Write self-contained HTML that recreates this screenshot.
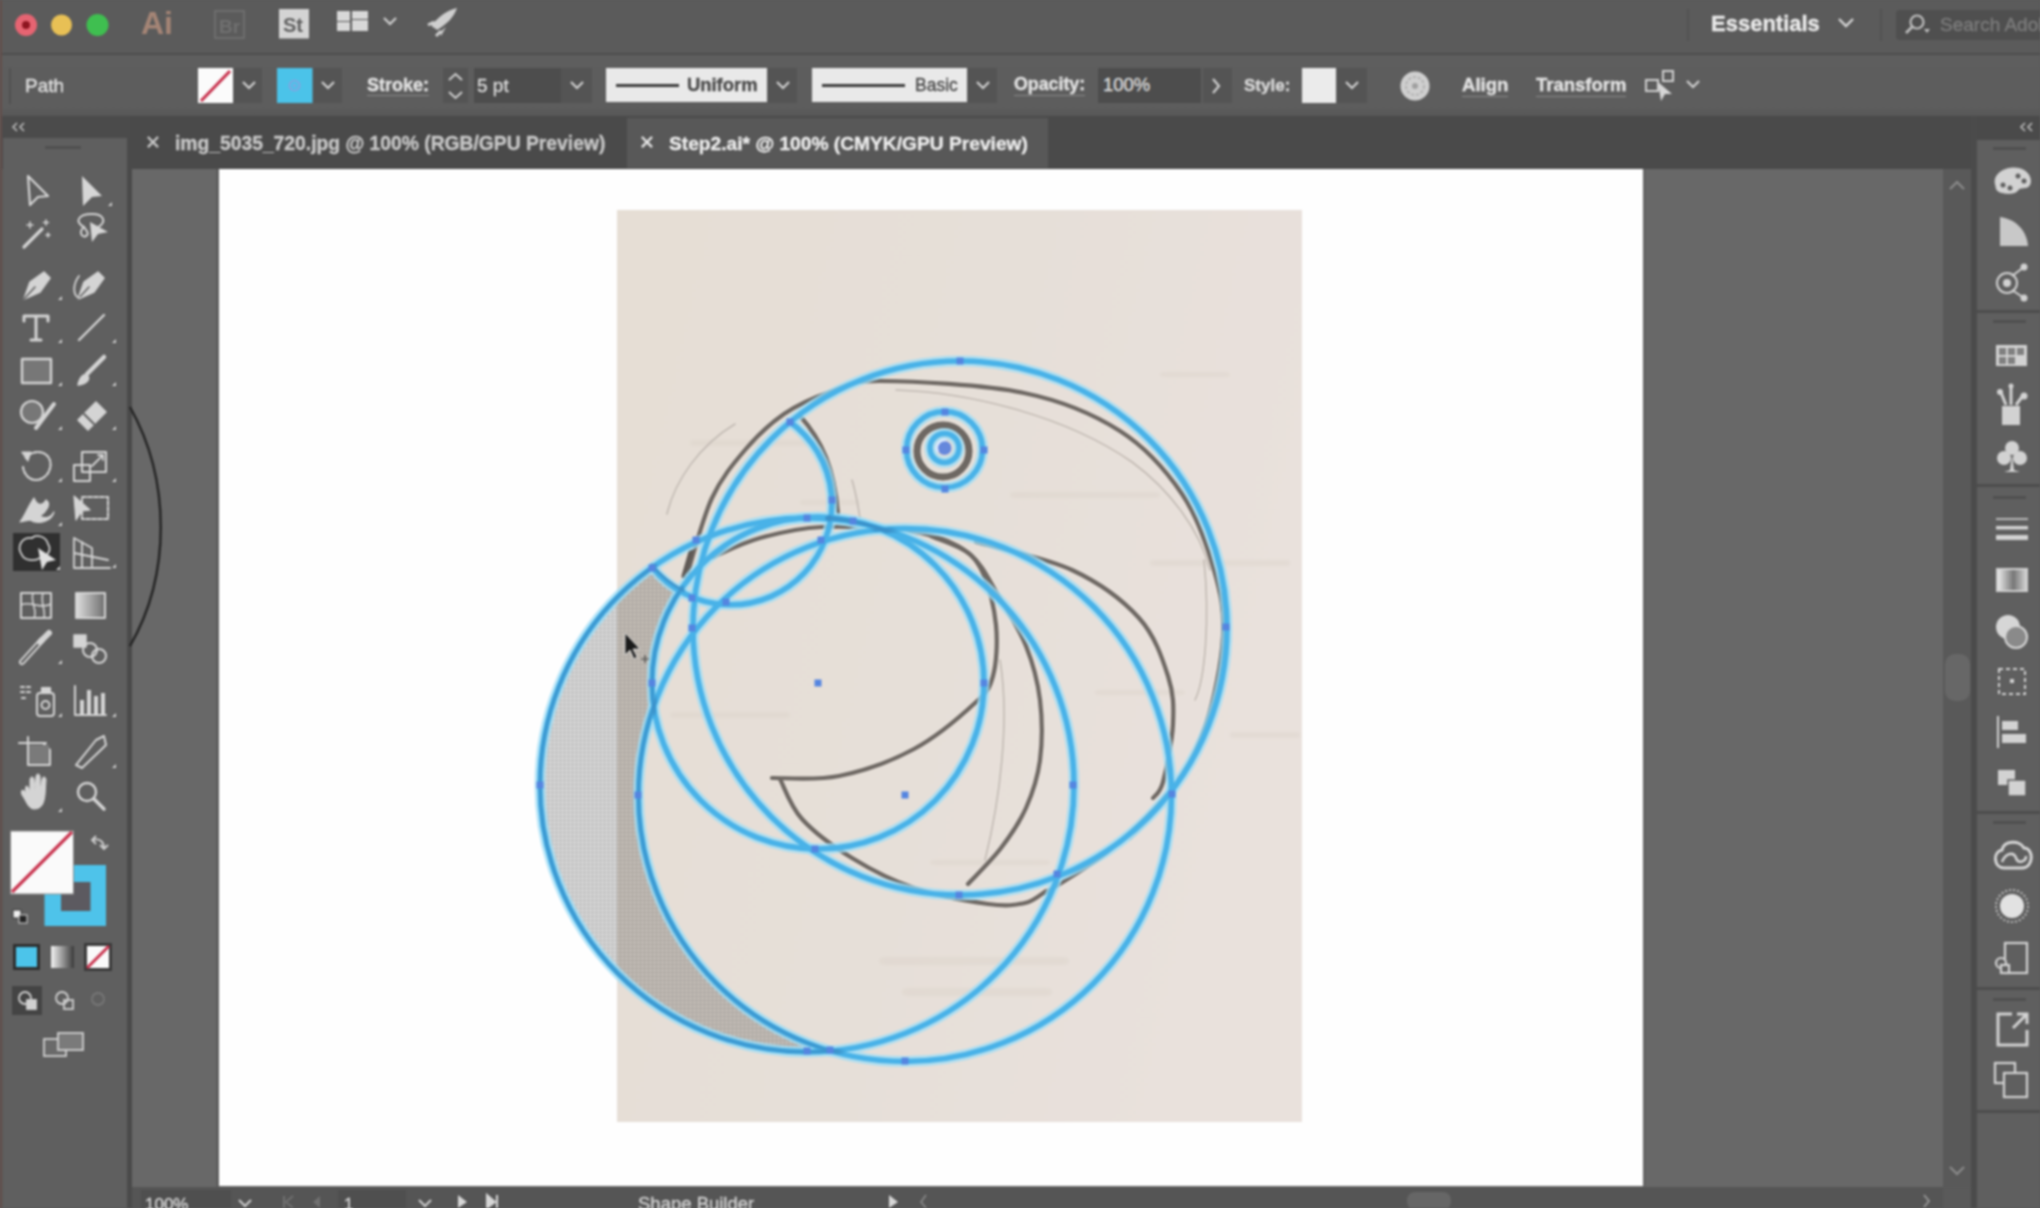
<!DOCTYPE html>
<html><head><meta charset="utf-8">
<style>
*{margin:0;padding:0;box-sizing:border-box}
html,body{width:2040px;height:1208px;overflow:hidden;background:#5a5a5a;font-family:"Liberation Sans",sans-serif}
#wrap{position:absolute;left:0;top:0;width:2040px;height:1208px;filter:blur(0.9px)}
.t{-webkit-text-stroke:0.35px currentColor}
.a{position:absolute}
#title{left:0;top:0;width:2040px;height:55px;background:#5b5b5b;border-bottom:2px solid #4d4d4d}
#ctrl{left:0;top:55px;width:2040px;height:61px;background:linear-gradient(#5e5e5e 0,#5d5d5d 85%,#575757 100%)}
#tabs{left:0;top:116px;width:2040px;height:53px;background:#4a4a4a}
#canvas{left:132px;top:169px;width:1811px;height:1018px;background:#686868}
#artboard{left:219px;top:169px;width:1424px;height:1017px;background:#fefefe}
#vscroll{left:1943px;top:169px;width:28px;height:1018px;background:#595959}
#status{left:132px;top:1187px;width:1811px;height:21px;background:#555555}
#lpanel{left:3px;top:138px;width:124px;height:1070px;background:#5f5f5f}
#lsep{left:127px;top:116px;width:5px;height:1092px;background:#4a4a4a}
#rdock{left:1977px;top:140px;width:63px;height:1068px;background:#5f5f5f}
#rsep{left:1971px;top:116px;width:6px;height:1092px;background:#4b4b4b}
.t{position:absolute;white-space:nowrap;line-height:1;color:#e4e4e4}
.b{font-weight:bold}
.u{border-bottom:1px solid #8a8a8a}
.dd{position:absolute;top:68px;height:35px;background:#545454}
.inp{position:absolute;top:68px;height:35px;background:#4d4d4d}
</style></head><body><div id="wrap">
<div id="title" class="a"></div>
<div id="ctrl" class="a"></div>
<div id="tabs" class="a"></div>
<div id="lsep" class="a"></div>
<div id="lpanel" class="a"></div>
<div id="canvas" class="a"></div>
<div id="artboard" class="a"></div>
<div class="a" style="left:216px;top:169px;width:3px;height:1018px;background:#5e5e5e"></div>
<div class="a" style="left:1643px;top:169px;width:3px;height:1018px;background:#636363"></div>
<div id="vscroll" class="a"></div>
<div id="rsep" class="a"></div>
<div id="rdock" class="a"></div>
<div id="status" class="a"></div>

<!-- ===== TITLE BAR ===== -->
<svg class="a" style="left:0;top:0" width="480" height="55">
  <circle cx="26" cy="25" r="11" fill="#e66472"/>
  <circle cx="26" cy="25" r="4" fill="#8e1520"/>
  <circle cx="61.5" cy="25" r="10.5" fill="#e8c055"/>
  <circle cx="97.5" cy="25" r="11" fill="#3fbf50"/>
  <text x="141" y="34" font-family="Liberation Sans" font-weight="bold" font-size="32" fill="#a58576">Ai</text>
  <rect x="215" y="11" width="29" height="27" fill="none" stroke="#6e6e6e" stroke-width="2"/>
  <text x="219" y="33" font-family="Liberation Sans" font-weight="bold" font-size="19" fill="#707070">Br</text>
  <rect x="279" y="9" width="30" height="29.5" fill="#d4d4d4"/>
  <text x="283" y="32" font-family="Liberation Sans" font-weight="bold" font-size="20" fill="#606060">St</text>
  <rect x="337" y="11" width="13" height="10" fill="#d8d8d8"/>
  <rect x="337" y="22" width="13" height="9" fill="#d8d8d8"/>
  <rect x="352" y="11" width="16" height="8" fill="#d8d8d8"/>
  <rect x="352" y="20" width="16" height="11" fill="#d8d8d8"/>
  <path d="M384 18 L390 24 L396 18" fill="none" stroke="#d0d0d0" stroke-width="2.2"/>
  <path d="M457 8 C448 10 438 16 432 26 L437 30 C447 24 454 17 457 8 Z" fill="#cfcfcf"/>
  <path d="M430 24 L437 20 L434 28 Z M440 32 L446 27 L441 36 Z" fill="#cfcfcf"/>
  <path d="M428 25 l6 -3 M436 36 l5 -5" stroke="#cfcfcf" stroke-width="3"/>
</svg>
<div class="a" style="left:1687px;top:9px;width:2px;height:32px;background:#525252"></div>
<div class="t b" style="left:1711px;top:13px;font-size:22px;color:#ececec">Essentials</div>
<svg class="a" style="left:1836px;top:16px" width="20" height="14"><path d="M3 3 L10 10 L17 3" fill="none" stroke="#d6d6d6" stroke-width="2.4"/></svg>
<div class="a" style="left:1880px;top:9px;width:2px;height:32px;background:#525252"></div>
<div class="a" style="left:1896px;top:10px;width:144px;height:30px;background:#4f4f4f;border-radius:4px 0 0 4px"></div>
<svg class="a" style="left:1900px;top:12px" width="34" height="26"><circle cx="17" cy="10" r="6.5" fill="none" stroke="#bfbfbf" stroke-width="2.2"/><path d="M12.5 14.5 L6 21" stroke="#bfbfbf" stroke-width="2.6"/><path d="M24 17 l6 0 l-3 4z" fill="#bfbfbf"/></svg>
<div class="t" style="left:1940px;top:15px;font-size:19px;color:#7c7c7c">Search Adob</div>

<!-- ===== CONTROL BAR ===== -->
<div class="a" style="left:9px;top:68px;width:2px;height:36px;background:#505050"></div>
<div class="t" style="left:25px;top:76px;font-size:19px;color:#e0e0e0">Path</div>
<svg class="a" style="left:198px;top:68px" width="36" height="36"><rect width="35" height="35" fill="#fbfbfb"/><path d="M3 33 L32 3" stroke="#c8324e" stroke-width="3.2"/></svg>
<div class="dd" style="left:234px;width:28px"></div>
<svg class="a" style="left:240px;top:80px" width="18" height="12"><path d="M3 2 L9 8 L15 2" fill="none" stroke="#d0d0d0" stroke-width="2.2"/></svg>
<svg class="a" style="left:277px;top:68px" width="36" height="36"><rect width="35.5" height="35" fill="#4bc3e9"/><circle cx="17.5" cy="17.5" r="5" fill="none" stroke="#8d9fe0" stroke-width="1.6"/><circle cx="17.5" cy="17.5" r="1.5" fill="#8d9fe0"/></svg>
<div class="dd" style="left:313px;width:29px"></div>
<svg class="a" style="left:319px;top:80px" width="18" height="12"><path d="M3 2 L9 8 L15 2" fill="none" stroke="#d0d0d0" stroke-width="2.2"/></svg>
<div class="t b u" style="left:367px;top:76px;font-size:18px;padding-bottom:1px">Stroke:</div>
<div class="dd" style="left:443px;width:25px"></div>
<svg class="a" style="left:443px;top:68px" width="25" height="36"><path d="M6 12 L12.5 6 L19 12 M6 24 L12.5 30 L19 24" fill="none" stroke="#cfcfcf" stroke-width="2"/></svg>
<div class="inp" style="left:474px;width:87px"></div>
<div class="t" style="left:477px;top:76px;font-size:19px;color:#dcdcdc">5 pt</div>
<div class="dd" style="left:561px;width:31px"></div>
<svg class="a" style="left:568px;top:80px" width="18" height="12"><path d="M3 2 L9 8 L15 2" fill="none" stroke="#d0d0d0" stroke-width="2.2"/></svg>

<div class="a" style="left:606px;top:68px;width:161px;height:34px;background:#e9e9e9"></div>
<div class="a" style="left:616px;top:84px;width:63px;height:3px;background:#3c3c3c"></div>
<div class="t b" style="left:687px;top:76px;font-size:18.4px;color:#4a4a4a">Uniform</div>
<div class="dd" style="left:768px;width:29px"></div>
<svg class="a" style="left:774px;top:80px" width="18" height="12"><path d="M3 2 L9 8 L15 2" fill="none" stroke="#d0d0d0" stroke-width="2.2"/></svg>
<div class="a" style="left:812px;top:68px;width:155px;height:34px;background:#e9e9e9"></div>
<div class="a" style="left:822px;top:84px;width:83px;height:3px;background:#3c3c3c"></div>
<div class="t" style="left:915px;top:77px;font-size:17.5px;color:#4a4a4a">Basic</div>
<div class="dd" style="left:968px;width:29px"></div>
<svg class="a" style="left:974px;top:80px" width="18" height="12"><path d="M3 2 L9 8 L15 2" fill="none" stroke="#d0d0d0" stroke-width="2.2"/></svg>

<div class="t b u" style="left:1014px;top:76px;font-size:17.8px;padding-bottom:1px">Opacity:</div>
<div class="inp" style="left:1098px;width:103px"></div>
<div class="t" style="left:1103px;top:76px;font-size:18.5px;color:#dcdcdc">100%</div>
<div class="dd" style="left:1203px;width:29px"></div>
<svg class="a" style="left:1209px;top:76px" width="14" height="20"><path d="M4 3 L10 10 L4 17" fill="none" stroke="#d0d0d0" stroke-width="2.2"/></svg>
<div class="t b" style="left:1244px;top:77px;font-size:17px;color:#dadada">Style:</div>
<div class="a" style="left:1302px;top:68px;width:34px;height:35px;background:#ebebeb"></div>
<div class="dd" style="left:1337px;width:30px"></div>
<svg class="a" style="left:1343px;top:80px" width="18" height="12"><path d="M3 2 L9 8 L15 2" fill="none" stroke="#d0d0d0" stroke-width="2.2"/></svg>
<svg class="a" style="left:1398px;top:69px" width="34" height="34"><circle cx="17" cy="17" r="14.5" fill="#cfcfcf"/><circle cx="17" cy="17" r="9" fill="none" stroke="#a8a8a8" stroke-width="1.5" stroke-dasharray="3 2"/><circle cx="17" cy="17" r="3" fill="#a0a0a0"/></svg>
<div class="t b u" style="left:1462px;top:76px;font-size:18.6px;padding-bottom:1px">Align</div>
<div class="t b u" style="left:1536px;top:76px;font-size:18.5px;padding-bottom:1px">Transform</div>
<svg class="a" style="left:1644px;top:68px" width="34" height="36"><rect x="2" y="12" width="12" height="11" fill="none" stroke="#cfcfcf" stroke-width="2"/><rect x="19" y="3" width="10" height="10" fill="none" stroke="#cfcfcf" stroke-width="2"/><path d="M14 14 L28 26 L21 26 L17 33 Z" fill="#d6d6d6"/></svg>
<svg class="a" style="left:1684px;top:79px" width="18" height="12"><path d="M3 2 L9 8 L15 2" fill="none" stroke="#d0d0d0" stroke-width="2.2"/></svg>

<!-- ===== TABS ===== -->
<div class="a" style="left:0;top:116px;width:130px;height:22px;background:#4b4b4b"></div>
<svg class="a" style="left:8px;top:120px" width="20" height="14"><path d="M9 3 L5 7 L9 11 M16 3 L12 7 L16 11" fill="none" stroke="#bdbdbd" stroke-width="1.6"/></svg>
<svg class="a" style="left:2016px;top:120px" width="20" height="14"><path d="M9 3 L5 7 L9 11 M16 3 L12 7 L16 11" fill="none" stroke="#bdbdbd" stroke-width="1.6"/></svg>
<div class="a" style="left:627px;top:118px;width:421px;height:50px;background:#585858"></div>
<div class="t" style="left:145px;top:133px;font-size:19px;color:#c9c9c9">&#x2715;</div>
<div class="t b" style="left:175px;top:134px;font-size:19.3px;color:#c8c8c8">img_5035_720.jpg @ 100% (RGB/GPU Preview)</div>
<div class="t" style="left:639px;top:133px;font-size:19px;color:#e8e8e8">&#x2715;</div>
<div class="t b" style="left:669px;top:134px;font-size:19.2px;color:#eeeeee">Step2.ai* @ 100% (CMYK/GPU Preview)</div>


<!-- ===== LEFT TOOLBAR ===== -->
<div class="a" style="left:0;top:0;width:2px;height:1208px;background:#644e4a"></div>
<div class="a" style="left:45px;top:146px;width:36px;height:3px;background:#505050"></div>
<svg class="a" style="left:0;top:160px" width="127" height="920" viewBox="0 160 127 920">
 <defs><linearGradient id="tg2" x1="0" x2="1"><stop offset="0" stop-color="#dedede"/><stop offset="1" stop-color="#6e6e6e"/></linearGradient></defs>
 <g fill="none" stroke="#d4d4d4" stroke-width="2.2" stroke-linejoin="round" stroke-linecap="round">
  <!-- selection -->
  <path d="M28 176 L48 196 L38 197 L30 205 Z"/>
  <!-- magic wand -->
  <path d="M24 247 L42 229" stroke-width="3.2"/>
  <path d="M30 222 l0 6 M27 225 l6 0 M46 220 l0 5 M43.5 222.5 l5 0 M48 233 l0 4 M46 235 l4 0" stroke-width="1.6"/>
  <!-- lasso -->
  <path d="M84 227 C74 222 78 214 92 214 C104 214 107 222 98 227 M84 227 C78 232 82 238 86 236 C90 234 86 230 84 227" stroke-width="2"/>
  <!-- pen -->
  <path d="M24 299 L30 282 L44 272 L50 278 L40 292 Z" fill="#d4d4d4" stroke-width="1.5"/>
  <path d="M24 299 L35 287" stroke="#5f5f5f" stroke-width="1.6"/>
  <!-- curvature pen -->
  <path d="M78 299 L84 282 L98 272 L104 278 L94 292 Z" fill="#d4d4d4" stroke-width="1.5"/>
  <path d="M78 299 L89 287" stroke="#5f5f5f" stroke-width="1.6"/>
  <path d="M79 276 C73 284 72 296 80 298" stroke-width="1.8"/>
  <!-- T -->
  <path d="M24 316 L48 316 M24 316 L24 321 M48 316 L48 321 M36 316 L36 340 M31 340 L41 340" stroke-width="3"/>
  <!-- line -->
  <path d="M79 340 L104 315" stroke-width="2.4"/>
  <!-- rectangle -->
  <rect x="22" y="359" width="29" height="24" fill="#777777" stroke-width="2.4"/>
  <!-- paintbrush -->
  <path d="M78 385 C80 376 84 373 88 376 C90 380 86 384 78 385 Z" fill="#d4d4d4" stroke-width="1.5"/>
  <path d="M87 374 L104 357" stroke-width="4.5"/>
  <!-- shaper -->
  <circle cx="32" cy="412" r="11" fill="#777777" stroke-width="2.2"/>
  <path d="M36 428 L54 404" stroke-width="4"/>
  <!-- eraser -->
  <path d="M78 420 L96 402 L106 412 L88 430 Z" fill="#d4d4d4" stroke-width="1.5"/>
  <path d="M84 414 L94 424" stroke="#5f5f5f" stroke-width="2"/>
  <!-- rotate -->
  <path d="M26 458 C32 450 44 450 49 458 C54 468 46 480 36 480 C28 480 23 472 23 466" stroke-width="2.2" stroke-dasharray="3 1.6"/>
  <path d="M22 452 L31 452 L28 461 Z" fill="#d4d4d4" stroke-width="1"/>
  <!-- scale -->
  <rect x="74" y="465" width="16" height="16" stroke-width="2"/>
  <rect x="82" y="452" width="24" height="20" stroke-width="2"/>
  <path d="M92 466 L103 455 M98 455 l5 0 l0 5" stroke-width="1.8"/>
  <!-- width/warp -->
  <path d="M20 522 C26 514 28 506 34 498 C38 508 44 504 46 500 C52 504 46 512 40 516 C46 520 52 516 54 512 C52 520 40 526 30 520 Z" fill="#d4d4d4" stroke-width="1.2"/>
  <!-- free transform -->
  <rect x="82" y="497" width="26" height="22" stroke-width="2" stroke-dasharray="4 2"/>
  <path d="M74 496 L90 510 L82 511 L76 520 Z" fill="#d4d4d4" stroke-width="1.2"/>
  <!-- perspective -->
  <path d="M74 538 L74 568 L110 568 M74 538 L92 548 L92 566 M74 553 L108 560 M82 542 L82 568" stroke-width="1.8"/>
  <!-- mesh -->
  <rect x="21" y="593" width="30" height="25" stroke-width="2"/>
  <path d="M21 605 C30 600 40 610 51 604 M33 593 C30 603 38 610 34 618 M43 593 C40 603 46 610 44 618" stroke-width="1.6"/>
  <!-- gradient tool -->
  <rect x="76" y="593" width="29" height="25" fill="url(#tg2)" stroke-width="2"/>
  <!-- eyedropper -->
  <path d="M22 662 L42 640" stroke-width="6"/>
  <path d="M22 662 L42 640" stroke="#5f5f5f" stroke-width="2.4"/>
  <path d="M40 642 L49 633" stroke-width="6"/>
  <!-- blend -->
  <rect x="74" y="635" width="12" height="12" fill="#d4d4d4" stroke-width="1.5"/>
  <circle cx="90" cy="650" r="7" stroke-width="2"/>
  <circle cx="99" cy="656" r="7" stroke-width="2"/>
  <!-- symbol sprayer -->
  <path d="M21 687 l3 0 M27 687 l3 0 M21 692 l3 0 M27 692 l3 0 M22 698 l3 0" stroke-width="2.2"/>
  <rect x="37" y="693" width="17" height="23" rx="3" stroke-width="2"/>
  <circle cx="45.5" cy="705" r="4" stroke-width="2"/>
  <path d="M42 688 l8 0 l0 5 l-8 0z" fill="#d4d4d4"/>
  <!-- column graph -->
  <path d="M75 686 L75 715 L106 715" stroke-width="2"/>
  <rect x="80" y="700" width="4" height="15" fill="#d4d4d4" stroke="none"/>
  <rect x="87" y="690" width="4" height="25" fill="#d4d4d4" stroke="none"/>
  <rect x="94" y="696" width="4" height="19" fill="#d4d4d4" stroke="none"/>
  <rect x="101" y="693" width="4" height="22" fill="#d4d4d4" stroke="none"/>
  <!-- artboard -->
  <path d="M19 743 L46 743 M28 737 L28 765 L50 765 L50 750 L43 743" stroke-width="2"/>
  <rect x="29" y="745" width="20" height="19" fill="#7a7a7a" stroke="none"/>
  <!-- knife/pencil -->
  <path d="M76 765 L96 740 L104 736 L106 745 L82 768 Z" stroke-width="2"/>
  <!-- hand -->
  <path d="M26 793 C24 784 28 784 30 792 L30 780 C30 776 34 776 34 780 L35 790 L36 777 C36 773 40 773 40 777 L40 790 L42 780 C42 776 46 776 46 780 L45 795 C44 803 42 809 34 809 C28 809 26 800 22 795 C20 790 23 788 26 793 Z" fill="#d4d4d4" stroke-width="1"/>
  <!-- zoom -->
  <circle cx="87" cy="792" r="9" stroke-width="2.4"/>
  <path d="M94 799 L104 809" stroke-width="3.5"/>
 </g>
 <g fill="#cfcfcf">
  <path d="M108 206 l4 -4 l0 4z M58 300 l4 -4 l0 4z M58 343 l4 -4 l0 4z M112 343 l4 -4 l0 4z M58 386 l4 -4 l0 4z M112 386 l4 -4 l0 4z M58 430 l4 -4 l0 4z M112 430 l4 -4 l0 4z M58 482 l4 -4 l0 4z M112 482 l4 -4 l0 4z M58 526 l4 -4 l0 4z M112 568 l4 -4 l0 4z M58 664 l4 -4 l0 4z M58 717 l4 -4 l0 4z M112 717 l4 -4 l0 4z M112 768 l4 -4 l0 4z M58 812 l4 -4 l0 4z"/>
 </g>
 <!-- direct selection filled -->
 <path d="M82 176 L102 196 L92 197 L83 206 Z" fill="#d6d6d6"/>
 <!-- lasso arrow -->
 <path d="M90 222 L108 232 L98 234 L92 242 Z" fill="#d6d6d6"/>
 <!-- shape builder selected -->
 <rect x="13" y="533" width="47" height="38" fill="#303030"/>
 <path d="M22 555 C16 546 22 537 32 538 C36 534 46 536 48 544 C52 550 48 556 40 558 C34 562 24 560 22 555 Z" fill="none" stroke="#cfcfcf" stroke-width="1.8"/>
 <path d="M38 548 L56 560 L47 562 L42 570 Z" fill="#e0e0e0"/>
 <path d="M56 570 l4 -4 l0 4z" fill="#cfcfcf"/>
 <!-- fill/stroke -->
 <rect x="44.5" y="865" width="61.5" height="61" fill="#4ec3ea"/>
 <rect x="61" y="882" width="29.5" height="29" fill="#5c5a60"/>
 <rect x="10.5" y="831" width="63" height="63" fill="#fafafa" stroke="#8a8a8a" stroke-width="1"/>
 <path d="M12 892 L72 832" stroke="#c9344f" stroke-width="3.2"/>
 <path d="M93 840 C100 838 104 842 104 848 M100 845 l4 4 l4 -4 M96 836 l-4 4 l4 4" fill="none" stroke="#cfcfcf" stroke-width="1.8"/>
 <rect x="13" y="910" width="8" height="8" fill="#f0f0f0" stroke="#333" stroke-width="1"/>
 <rect x="19" y="915" width="8" height="8" fill="#222" stroke="#ddd" stroke-width="1"/>
 <!-- modes -->
 <rect x="13" y="944" width="27" height="26" fill="#2e2e2e"/>
 <rect x="16" y="947" width="21" height="20" fill="#4cc4ea"/>
 <defs><linearGradient id="tg" x1="0" x2="1"><stop offset="0" stop-color="#f4f4f4"/><stop offset="1" stop-color="#3a3a3a"/></linearGradient></defs>
 <rect x="51" y="946" width="23" height="22" fill="url(#tg)"/>
 <rect x="84" y="943" width="28" height="28" fill="#3a3a3a"/>
 <rect x="87" y="946" width="22" height="22" fill="#fafafa"/>
 <path d="M87 968 L109 946" stroke="#c9344f" stroke-width="3"/>
 <rect x="12" y="986" width="30" height="29" fill="#444444"/>
 <g fill="none" stroke="#d0d0d0" stroke-width="1.8">
  <circle cx="25" cy="998" r="6"/><rect x="27" y="1000" width="9" height="9" fill="#d0d0d0"/>
  <circle cx="62" cy="998" r="6"/><rect x="64" y="1000" width="9" height="9"/>
  <circle cx="98" cy="999" r="6" stroke="#777"/>
  <rect x="44" y="1039" width="22" height="17" stroke="#d0d0d0" fill="#6a6a6a"/>
  <rect x="58" y="1033" width="25" height="17" stroke="#d0d0d0" fill="#7a7a7a"/>
 </g>
</svg>


<!-- ===== RIGHT DOCK ===== -->
<svg class="a" style="left:1940px;top:140px" width="100" height="1068" viewBox="1940 140 100 1068">
 <!-- scrollbar arrows & thumb -->
 <path d="M1950 189 L1957 182 L1964 189" fill="none" stroke="#8c8c8c" stroke-width="2"/>
 <path d="M1950 1167 L1957 1174 L1964 1167" fill="none" stroke="#8c8c8c" stroke-width="2"/>
 <rect x="1945" y="654" width="25" height="47" rx="10" fill="#676767"/>
 <!-- dividers -->
 <rect x="1977" y="310" width="63" height="3" fill="#4d4d4d"/>
 <rect x="1977" y="484" width="63" height="3" fill="#4d4d4d"/>
 <rect x="1977" y="811" width="63" height="3" fill="#4d4d4d"/>
 <rect x="1977" y="987" width="63" height="3" fill="#4d4d4d"/>
 <rect x="1977" y="1110" width="63" height="3" fill="#4d4d4d"/>
 <g fill="#505050">
  <rect x="1993" y="147" width="33" height="3"/>
  <rect x="1993" y="320" width="33" height="3"/>
  <rect x="1993" y="496" width="33" height="3"/>
  <rect x="1993" y="821" width="33" height="3"/>
  <rect x="1993" y="998" width="33" height="3"/>
 </g>
 <g fill="#d2d2d2" stroke="#d2d2d2">
  <!-- palette -->
  <path d="M1996 186 C1992 176 2002 168 2014 168 C2026 168 2032 176 2030 184 C2028 190 2020 186 2018 190 C2016 194 2006 194 2000 192 C1997 191 1996 189 1996 186 Z" stroke-width="1"/>
  <g fill="#5f5f5f" stroke="none"><circle cx="2003" cy="185" r="2.5"/><circle cx="2010" cy="188" r="2.5"/><circle cx="2018" cy="176" r="2.5"/><circle cx="2024" cy="181" r="2.5"/></g>
  <!-- gradient quarter -->
  <path d="M2000 217 C2016 219 2027 231 2028 246 L2000 246 Z" stroke="none" fill="#c8c8c8"/>
  <!-- appearance -->
  <circle cx="2007" cy="283" r="10" fill="none" stroke-width="2"/>
  <circle cx="2007" cy="283" r="4" stroke="none"/>
  <path d="M2012 276 L2024 267 M2012 290 L2024 298" stroke-width="2"/>
  <circle cx="2024" cy="267" r="3.5" stroke="none"/><circle cx="2024" cy="298" r="3.5" stroke="none"/>
  <!-- swatches -->
  <rect x="1996" y="345" width="31" height="21" stroke="none"/>
  <g fill="#808080" stroke="none"><rect x="1999" y="348" width="7" height="7"/><rect x="2008" y="348" width="7" height="7"/><rect x="2017" y="348" width="7" height="7"/><rect x="1999" y="357" width="7" height="7"/><rect x="2008" y="357" width="7" height="7"/></g>
  <!-- brushes -->
  <rect x="2002" y="406" width="18" height="19" stroke="none"/>
  <path d="M2006 405 L2000 390 M2011 405 L2011 385 M2016 405 L2024 394" stroke-width="3"/>
  <circle cx="2000" cy="392" r="3" stroke="none"/><circle cx="2024" cy="396" r="3.5" stroke="none"/><circle cx="2011" cy="386" r="2.5" stroke="none"/>
  <!-- club -->
  <circle cx="2012" cy="448" r="7" stroke="none"/><circle cx="2004" cy="458" r="7" stroke="none"/><circle cx="2020" cy="458" r="7" stroke="none"/>
  <path d="M2012 455 L2010 470 L2004 472 L2020 472 L2014 470 Z" stroke="none"/>
  <!-- stroke lines -->
  <rect x="1996" y="518" width="32" height="2" stroke="none" fill="#b8b8b8"/>
  <rect x="1996" y="526" width="32" height="3.5" stroke="none"/>
  <rect x="1996" y="535" width="32" height="5" stroke="none"/>
 </g>
 <defs><linearGradient id="rg" x1="0" x2="1"><stop offset="0" stop-color="#dedede"/><stop offset="1" stop-color="#6a6a6a"/></linearGradient>
 <linearGradient id="rg2" x1="0" x2="1"><stop offset="0" stop-color="#f0f0f0"/><stop offset="0.55" stop-color="#777"/><stop offset="1" stop-color="#d8d8d8"/></linearGradient></defs>
 <rect x="1997" y="569" width="30" height="22" fill="url(#rg2)" stroke="#cfcfcf" stroke-width="2"/>
 <circle cx="2008" cy="627" r="12" fill="#d6d6d6"/>
 <circle cx="2016" cy="637" r="11" fill="#8a8a8a" stroke="#d6d6d6" stroke-width="2"/>
 <g fill="none" stroke="#d2d2d2" stroke-width="2">
  <rect x="1999" y="669" width="26" height="25" stroke-dasharray="4 3"/>
  <rect x="2010" y="679" width="4" height="4" fill="#d2d2d2" stroke="none"/>
  <path d="M1998 716 L1998 748"/>
 </g>
 <g fill="#d2d2d2">
  <rect x="2002" y="721" width="16" height="9"/>
  <rect x="2002" y="734" width="24" height="9"/>
  <rect x="1998" y="770" width="17" height="15"/>
  <rect x="2008" y="780" width="18" height="16" stroke="#5f5f5f" stroke-width="1.5"/>
 </g>
 <!-- CC -->
 <g fill="none" stroke="#d6d6d6" stroke-width="3">
  <path d="M2004 868 C1994 868 1992 852 2002 850 C2004 840 2020 840 2024 848 C2034 848 2034 868 2022 868 Z"/>
  <path d="M2002 862 C2006 852 2014 852 2016 858 C2018 864 2026 862 2026 856" stroke-width="2.5"/>
 </g>
 <circle cx="2012" cy="906" r="12" fill="#e2e2e2"/>
 <circle cx="2012" cy="906" r="16" fill="none" stroke="#bdbdbd" stroke-width="2" stroke-dasharray="2 2"/>
 <g fill="none" stroke="#d2d2d2" stroke-width="2.2">
  <rect x="2005" y="943" width="22" height="30"/>
  <circle cx="2001" cy="963" r="5" fill="#5f5f5f"/>
  <rect x="2001" y="965" width="8" height="8" fill="#5f5f5f"/>
  <path d="M1998 1021 L1998 1045 L2027 1045 L2027 1030 M2012 1014 L1998 1014 L1998 1021 M2017 1014 L2027 1014 L2027 1024 M2013 1028 L2026 1015" stroke-width="3"/>
  <rect x="1995" y="1063" width="20" height="20"/>
  <rect x="2004" y="1073" width="23" height="24" fill="#5f5f5f"/>
 </g>
</svg>


<!-- ===== STATUS BAR ===== -->
<div class="a" style="left:141px;top:1190px;width:90px;height:18px;background:#4f4f4f"></div>
<div class="t" style="left:145px;top:1196px;font-size:17px;color:#d8d8d8">100%</div>
<div class="a" style="left:338px;top:1190px;width:68px;height:18px;background:#4f4f4f"></div>
<div class="t" style="left:344px;top:1196px;font-size:17px;color:#d8d8d8">1</div>
<div class="t" style="left:638px;top:1195px;font-size:18.5px;color:#d0d0d0">Shape Builder</div>
<svg class="a" style="left:132px;top:1187px" width="1840" height="21" viewBox="132 1187 1840 21">
 <path d="M239 1200 L245 1206 L251 1200" fill="none" stroke="#cfcfcf" stroke-width="2"/>
 <path d="M419 1200 L425 1206 L431 1200" fill="none" stroke="#cfcfcf" stroke-width="2"/>
 <path d="M284 1196 L284 1208 M293 1196 L286 1202 L293 1208" fill="none" stroke="#707070" stroke-width="2"/>
 <path d="M320 1196 L313 1202 L320 1208" fill="#707070"/>
 <path d="M458 1195 L467 1202 L458 1208 Z" fill="#d6d6d6"/>
 <path d="M487 1195 L495 1202 L487 1208 Z M497 1195 L497 1208" fill="#d6d6d6" stroke="#d6d6d6" stroke-width="2"/>
 <path d="M889 1195 L898 1202 L889 1208 Z" fill="#d6d6d6"/>
 <path d="M926 1195 L921 1202 L926 1208" fill="none" stroke="#8a8a8a" stroke-width="1.6"/>
 <rect x="1407" y="1192" width="44" height="18" rx="8" fill="#666666"/>
 <path d="M1924 1195 L1929 1201 L1924 1207" fill="none" stroke="#9a9a9a" stroke-width="1.8"/>
</svg>

<!-- ===== ARTWORK ===== -->
<svg class="a" style="left:0;top:0" width="2040" height="1208" viewBox="0 0 2040 1208">
  <defs>
    <pattern id="hatch" width="4" height="4" patternUnits="userSpaceOnUse">
      <rect width="4" height="4" fill="#000" fill-opacity="0.15"/>
      <rect width="4" height="1" fill="#000" fill-opacity="0.12"/>
      <rect width="1" height="3" y="1" fill="#000" fill-opacity="0.12"/>
    </pattern>
    <mask id="crescent">
      <circle cx="807" cy="785" r="267" fill="#fff"/>
      <circle cx="905" cy="795" r="266.5" fill="#000"/>
      <circle cx="818" cy="683" r="166" fill="#000"/>
      <circle cx="730" cy="501" r="101" fill="#000"/>
    </mask>
    <mask id="crescentStroke">
      <circle cx="807" cy="785" r="271" fill="#fff"/>
      <circle cx="905" cy="795" r="262.5" fill="#000"/>
      <circle cx="818" cy="683" r="162" fill="#000"/>
      <circle cx="730" cy="501" r="97" fill="#000"/>
    </mask>
    <linearGradient id="photo" x1="0" y1="0" x2="1" y2="0.3">
      <stop offset="0" stop-color="#e6ded5"/>
      <stop offset="0.5" stop-color="#e6dfd8"/>
      <stop offset="1" stop-color="#e9e1dc"/>
    </linearGradient>
    <filter id="soft" x="-5%" y="-5%" width="110%" height="110%"><feGaussianBlur stdDeviation="0.9"/></filter>
    <filter id="soft2" x="-5%" y="-5%" width="110%" height="110%"><feGaussianBlur stdDeviation="0.6"/></filter>
  </defs>
  <rect x="617" y="210" width="685" height="912" fill="url(#photo)"/>
  <!-- faint paper marks -->
  <g fill="#d9d0c6" opacity="0.35" filter="url(#soft)">
    <rect x="690" y="440" width="130" height="6" rx="3"/>
    <rect x="1010" y="492" width="150" height="6" rx="3"/>
    <rect x="1150" y="560" width="140" height="6" rx="3"/>
    <rect x="670" y="712" width="120" height="6" rx="3"/>
    <rect x="1230" y="732" width="70" height="6" rx="3"/>
    <rect x="1095" y="690" width="90" height="5" rx="3"/>
    <rect x="879" y="957" width="190" height="8" rx="4"/>
    <rect x="902" y="988" width="150" height="8" rx="4"/>
    <rect x="1160" y="372" width="70" height="5" rx="3"/>
    <rect x="800" y="500" width="60" height="5" rx="3"/>
    <rect x="930" y="860" width="120" height="5" rx="3"/>
  </g>
  <!-- pencil sketch -->
  <g fill="none" stroke-linecap="round" filter="url(#soft2)">
    <g stroke="#c2bab3" stroke-width="1.6">
      <path d="M667 514 C675 480 700 445 735 424"/>
      <path d="M896 390 C960 392 1060 412 1132 462 C1170 490 1200 530 1210 570"/>
      <path d="M1204 560 C1210 620 1205 680 1195 700"/>
      <path d="M1000 660 C1010 720 1000 800 985 860"/>
      <path d="M852 480 C858 500 860 520 862 530"/>
      <path d="M1130 840 C1150 820 1180 790 1190 760"/>
    </g>
    <g stroke="#6e6864" stroke-width="4.2">
      <path d="M688.0 572.0 C692.0 559.7 702.5 518.3 712.0 498.0 C721.5 477.7 733.0 464.0 745.0 450.0 C757.0 436.0 769.8 423.7 784.0 414.0 C798.2 404.3 814.0 397.5 830.0 392.0 C846.0 386.5 847.7 380.8 880.0 381.0 C912.3 381.2 984.0 384.7 1024.0 393.0 C1064.0 401.3 1093.7 414.2 1120.0 431.0 C1146.3 447.8 1166.3 470.8 1182.0 494.0 C1197.7 517.2 1207.2 546.3 1214.0 570.0 C1220.8 593.7 1224.3 610.3 1223.0 636.0 C1221.7 661.7 1214.3 698.8 1206.0 724.0 C1197.7 749.2 1189.0 766.0 1173.0 787.0 C1157.0 808.0 1131.3 832.3 1110.0 850.0 C1088.7 867.7 1055.8 885.8 1045.0 893.0"/>
      <path d="M800 416 C822 440 835 470 838 515"/>
      <path d="M713.0 557.0 C720.8 553.8 741.8 543.0 760.0 538.0 C778.2 533.0 797.2 528.2 822.0 527.0 C846.8 525.8 886.3 527.8 909.0 531.0 C931.7 534.2 945.7 539.0 958.0 546.0 C970.3 553.0 976.7 559.8 983.0 573.0 C989.3 586.2 994.3 607.8 996.0 625.0 C997.7 642.2 996.5 663.0 993.0 676.0 C989.5 689.0 988.2 690.8 975.0 703.0 C961.8 715.2 936.7 736.8 914.0 749.0 C891.3 761.2 862.7 771.2 839.0 776.0 C815.3 780.8 783.2 777.7 772.0 778.0"/>
      <path d="M780.0 779.0 C783.7 785.7 790.0 805.8 802.0 819.0 C814.0 832.2 833.3 846.5 852.0 858.0 C870.7 869.5 891.3 880.3 914.0 888.0 C936.7 895.7 969.5 901.5 988.0 904.0 C1006.5 906.5 1015.3 905.2 1025.0 903.0 C1034.7 900.8 1042.5 893.0 1046.0 891.0"/>
      <path d="M931.0 536.0 C937.7 539.2 959.8 545.2 971.0 555.0 C982.2 564.8 988.8 579.8 998.0 595.0 C1007.2 610.2 1019.0 628.5 1026.0 646.0 C1033.0 663.5 1037.7 681.0 1040.0 700.0 C1042.3 719.0 1042.3 742.0 1040.0 760.0 C1037.7 778.0 1032.5 793.3 1026.0 808.0 C1019.5 822.7 1010.7 835.3 1001.0 848.0 C991.3 860.7 973.5 878.0 968.0 884.0"/>
      <path d="M976.0 542.0 C992.0 546.7 1044.8 557.3 1072.0 570.0 C1099.2 582.7 1123.0 600.3 1139.0 618.0 C1155.0 635.7 1162.3 658.3 1168.0 676.0 C1173.7 693.7 1173.8 706.3 1173.0 724.0 C1172.2 741.7 1166.3 769.7 1163.0 782.0 C1159.7 794.3 1154.7 795.3 1153.0 798.0"/>
      <circle cx="943" cy="451" r="26" stroke-width="7"/>
    </g>
    <path d="M691 552 L684 576" stroke="#605a56" stroke-width="5"/>
  </g>
  <!-- hatched crescent -->
  <rect x="530" y="500" width="560" height="580" fill="url(#hatch)" mask="url(#crescent)"/>
  <!-- selection paths -->
  <g filter="url(#soft2)">
  <g fill="none" stroke="#9edcf6" stroke-opacity="0.75" stroke-width="11">
    <circle cx="960" cy="628" r="267"/>
    <circle cx="807" cy="785" r="267"/>
    <circle cx="905" cy="795" r="266.5"/>
    <circle cx="818" cy="683" r="166"/>
    <path d="M790 422 A101 101 0 1 1 652.8 568"/>
    <circle cx="944.5" cy="449.5" r="38"/>
    <circle cx="944.5" cy="448" r="14.5"/>
  </g>
  <g fill="none" stroke="#48b2e8" stroke-width="5.5">
    <circle cx="960" cy="628" r="267"/>
    <circle cx="807" cy="785" r="267"/>
    <circle cx="905" cy="795" r="266.5"/>
    <circle cx="818" cy="683" r="166"/>
    <path d="M790 422 A101 101 0 1 1 652.8 568"/>
    <circle cx="944.5" cy="449.5" r="38"/>
    <circle cx="944.5" cy="448" r="14.5"/>
  </g>
  <g fill="none" stroke="#3a8dc6" stroke-width="3.2" stroke-opacity="0.7" mask="url(#crescentStroke)">
    <circle cx="807" cy="785" r="267"/>
    <circle cx="905" cy="795" r="266.5"/>
    <circle cx="818" cy="683" r="166"/>
    <circle cx="730" cy="501" r="101"/>
  </g>
  <circle cx="944.5" cy="448" r="7" fill="#6688dc"/>
  <path d="M938 452 A8 8 0 0 1 946 440" fill="none" stroke="#dbe9ff" stroke-width="2.5"/>
  <!-- anchor points -->
  <g fill="#5585e0" transform="translate(0.5 0.5)">
    <rect x="956" y="357" width="7" height="7"/>
    <rect x="1222" y="623" width="7" height="7"/>
    <rect x="955" y="891" width="7" height="7"/>
    <rect x="688" y="624" width="7" height="7"/>
    <rect x="536" y="781" width="7" height="7"/>
    <rect x="803" y="1047" width="7" height="7"/>
    <rect x="1069" y="781" width="7" height="7"/>
    <rect x="634" y="791" width="7" height="7"/>
    <rect x="901" y="1057" width="7" height="7"/>
    <rect x="1168" y="790" width="7" height="7"/>
    <rect x="648" y="679" width="7" height="7"/>
    <rect x="980" y="679" width="7" height="7"/>
    <rect x="811" y="845" width="7" height="7"/>
    <rect x="828" y="496" width="7" height="7"/>
    <rect x="722" y="598" width="7" height="7"/>
    <rect x="786" y="418" width="7" height="7"/>
    <rect x="941" y="408" width="7" height="7"/>
    <rect x="902" y="446" width="7" height="7"/>
    <rect x="980" y="446" width="7" height="7"/>
    <rect x="941" y="485" width="7" height="7"/>
    <rect x="814" y="679" width="7" height="7"/>
    <rect x="901" y="791" width="7" height="7"/>
    <rect x="826" y="1046" width="7" height="7"/>
    <rect x="1053" y="870" width="7" height="7"/>
    <rect x="849" y="517" width="7" height="7"/>
    <rect x="803" y="514" width="7" height="7"/>
    <rect x="688" y="594" width="7" height="7"/>
    <rect x="648" y="564" width="7" height="7"/>
    <rect x="692" y="536" width="7" height="7"/>
    <rect x="817" y="536" width="7" height="7"/>
  </g>
  </g>
  <!-- black arc at left of canvas -->
  <path d="M130 407 C171 480 171 575 130 646" fill="none" stroke="#222" stroke-width="2.4"/>
  <!-- cursor -->
  <path d="M625 633 L625 655 L630 650 L634 659 L637 657 L633 649 L640 649 Z" fill="#1a1a1a" stroke="#eee" stroke-width="0.8"/>
  <path d="M645 655 l0 8 M641 659 l8 0" stroke="#444" stroke-width="1.2"/>
</svg>
</div></body></html>
